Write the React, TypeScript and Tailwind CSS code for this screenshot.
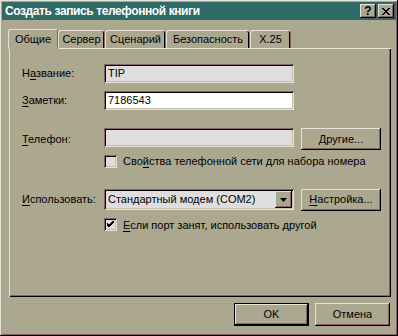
import React from "react";

// raised / sunken edges in the old 3D style
const raised =
  "shadow-[inset_-1px_-1px_#000,inset_1px_1px_#e6e2d6,inset_-2px_-2px_#846464]";
const sunken =
  "shadow-[inset_1px_1px_#846464,inset_-1px_-1px_#e6e2d6,inset_2px_2px_#000,inset_-2px_-2px_#c4c0aa]";

const Key = ({ children }: { children: React.ReactNode }) => (
  <span className="underline underline-offset-2">{children}</span>
);

const Field = ({
  value,
  white = false,
}: {
  value?: string;
  white?: boolean;
}) => (
  <div
    className={`flex h-[19px] w-[190px] items-center px-[4px] ${sunken} ${
      white ? "bg-white" : "bg-[#dedede]"
    }`}
  >
    {value}
  </div>
);

const Button = ({
  children,
  className = "",
}: {
  children: React.ReactNode;
  className?: string;
}) => (
  <div
    className={`flex items-center justify-center bg-[#aca890] ${raised} ${className}`}
  >
    {children}
  </div>
);

const Check = ({ checked = false }: { checked?: boolean }) => (
  <div className={`flex h-[13px] w-[13px] items-center justify-center bg-[#dedede] ${sunken}`}>
    {checked && (
      <svg width="7" height="7" viewBox="0 0 7 7">
        <path d="M0 2 L2 4 L7 -1 M0 3 L2 5 L7 0 M0 4 L2 6 L7 1" stroke="#000" strokeWidth="1" fill="none" />
      </svg>
    )}
  </div>
);

const tabs = [
  { label: "Сервер", w: "w-[47px]" },
  { label: "Сценарий", w: "w-[61px]" },
  { label: "Безопасность", w: "w-[84px]" },
  { label: "X.25", w: "w-[41px]" },
];

export default function App() {
  return (
    <div
      className={`flex h-[336px] w-[398px] flex-col bg-[#aca890] p-[2px] text-[11px] text-black ${raised}`}
      style={{ fontFamily: '"Liberation Sans", Arial, sans-serif' }}
    >
      {/* Title bar */}
      <div className="flex h-[18px] items-center justify-between bg-[#306a67] pl-[3px] pr-[2px]">
        <span className="text-[12px] font-bold tracking-[-0.4px] text-white">
          Создать запись телефонной книги
        </span>
        <div className="flex gap-[2px]">
          <Button className="h-[14px] w-[16px] text-[12px] font-bold leading-none">?</Button>
          <Button className="h-[14px] w-[16px]">
            <svg width="8" height="7" viewBox="0 0 8 7">
              <path d="M0 0 L7 7 M1 0 L8 7 M7 0 L0 7 M8 0 L1 7" stroke="#000" strokeWidth="1" />
            </svg>
          </Button>
        </div>
      </div>

      {/* Tabs */}
      <div className="mt-[9px] flex items-end pl-[6px] text-[11px]">
        <div className="relative z-10 -mb-[1px] flex h-[20px] w-[50px] items-center justify-center rounded-t-[3px] border-l border-t border-r border-[#e6e2d6] border-r-[#846464] bg-[#aca890] pb-[1px]">
          Общие
        </div>
        {tabs.map((t) => (
          <div
            key={t.label}
            className={`flex h-[18px] ${t.w} items-center justify-center rounded-t-[3px] border-l border-t border-r border-[#e6e2d6] border-r-[#846464] shadow-[inset_-1px_0_#000]`}
          >
            {t.label}
          </div>
        ))}
      </div>

      {/* Panel */}
      <div className="ml-[7px] h-[249px] w-[382px] border-l border-t border-[#e6e2d6] bg-[#aca890] shadow-[inset_-1px_-1px_#000,inset_-2px_-2px_#846464] pl-[12px] pt-[15px] text-[11px]">
        <div className="flex items-center">
          <span className="w-[82px]">
            Н<Key>а</Key>звание:
          </span>
          <Field value="TIP" />
        </div>
        <div className="mt-[8px] flex items-center">
          <span className="w-[82px]">
            <Key>З</Key>аметки:
          </span>
          <Field value="7186543" white />
        </div>
        <div className="mt-[18px] flex items-start">
          <span className="w-[82px] pt-[3px]">
            <Key>Т</Key>елефон:
          </span>
          <Field />
          <Button className="ml-[7px] h-[22px] w-[80px]">Другие...</Button>
        </div>
        <div className="mt-[3px] flex items-center pl-[82px]">
          <Check />
          <span className="ml-[6px]">
            Сво<Key>й</Key>ства телефонной сети для набора номера
          </span>
        </div>
        <div className="mt-[19px] flex items-center">
          <span className="w-[82px]">
            <Key>И</Key>спользовать:
          </span>
          <div className={`flex h-[21px] w-[190px] items-center justify-between bg-[#dedede] pl-[4px] pr-[2px] ${sunken}`}>
            <span>Стандартный модем (COM2)</span>
            <Button className="h-[17px] w-[17px]">
              <svg width="7" height="4" viewBox="0 0 7 4">
                <path d="M0 0 H7 L3.5 4 Z" fill="#000" />
              </svg>
            </Button>
          </div>
          <Button className="ml-[7px] h-[22px] w-[80px]">
            <span>
              <Key>Н</Key>астройка...
            </span>
          </Button>
        </div>
        <div className="mt-[6px] flex items-center pl-[82px]">
          <Check checked />
          <span className="ml-[6px]">
            <Key>Е</Key>сли порт занят, использовать другой
          </span>
        </div>
      </div>

      {/* Bottom buttons */}
      <div className="mt-[6px] flex justify-end gap-[6px] pr-[6px] text-[11px]">
        <div className="flex h-[23px] w-[75px] items-center justify-center border border-black">
          <Button className="h-full w-full">OK</Button>
        </div>
        <Button className="h-[23px] w-[75px]">Отмена</Button>
      </div>
    </div>
  );
}
